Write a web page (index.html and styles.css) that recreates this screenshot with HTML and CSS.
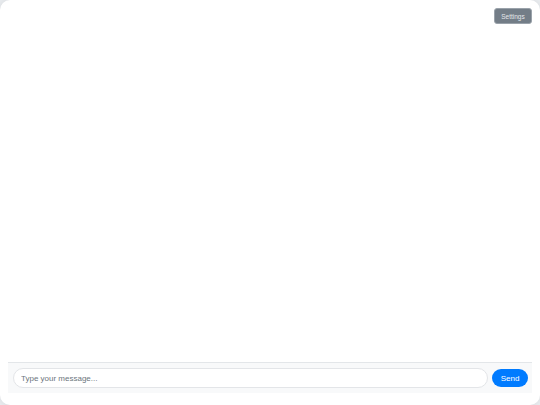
FILE: index.html
```html
<!DOCTYPE html>
<html>
<head>
<meta charset="utf-8">
<link rel="stylesheet" href="styles.css">
</head>
<body>
<div class="app">
  <div class="topbar">
    <button class="settings-btn">Settings</button>
  </div>
  <div class="messages"></div>
  <div class="composer">
    <input class="message-input" type="text" placeholder="Type your message...">
    <button class="send-btn">Send</button>
  </div>
</div>
</body>
</html>
```

FILE: styles.css
```css
html, body {
  margin: 0;
  padding: 0;
  height: 100%;
}
body {
  background: #e9ecef;
  font-family: "Liberation Sans", Arial, sans-serif;
}
.app {
  box-sizing: border-box;
  height: 405px;
  background: #ffffff;
  border-radius: 10px;
  box-shadow: 0 0 6px rgba(0, 0, 0, 0.08);
  padding: 8px 8px 12px 8px;
  display: flex;
  flex-direction: column;
}
.topbar {
  display: flex;
  justify-content: flex-end;
}
.settings-btn {
  box-sizing: border-box;
  width: 38px;
  height: 16px;
  padding: 0;
  border: 1px solid #9aa2aa;
  border-radius: 3px;
  background: #737d87;
  color: #e4e7ea;
  font-family: "Liberation Sans", Arial, sans-serif;
  font-size: 6.5px;
}
.messages {
  flex: 1;
}
.composer {
  display: flex;
  align-items: center;
  gap: 4px;
  background: #f8f9fa;
  border-top: 1px solid #e3e6e9;
  padding: 5px 4px 5px 5px;
}
.message-input {
  box-sizing: border-box;
  flex: 1;
  height: 20px;
  border: 1px solid #e3e5e8;
  border-radius: 10px;
  background: #ffffff;
  padding: 0 7px;
  font-family: "Liberation Sans", Arial, sans-serif;
  font-size: 8px;
  outline: none;
}
.message-input::placeholder {
  color: #6c757d;
}
.send-btn {
  box-sizing: border-box;
  width: 36px;
  height: 18px;
  padding: 0;
  border: none;
  border-radius: 9px;
  background: #007bff;
  color: #ffffff;
  font-family: "Liberation Sans", Arial, sans-serif;
  font-size: 8px;
}
```
